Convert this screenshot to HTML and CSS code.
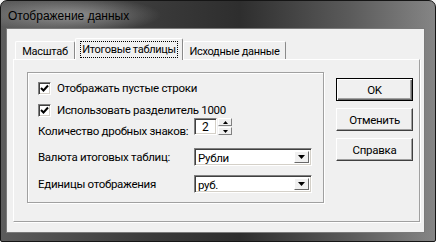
FILE: index.html
```html
<!DOCTYPE html>
<html lang="ru">
<head>
<meta charset="utf-8"/>
<title>Отображение данных</title>
<link rel="stylesheet" href="styles.css">
</head>
<body>
<div class="window">
  <div class="titlebar"><span class="title">Отображение данных</span></div>
  <div class="client">
    <div class="tabs">
      <div class="tab tab-scale">Масштаб</div>
      <div class="tab tab-totals active"><span class="focus">Итоговые таблицы</span></div>
      <div class="tab tab-source">Исходные данные</div>
    </div>
    <div class="panel">
      <div class="group">
        <label class="row row-check first">
          <span class="check"><svg width="9" height="9" viewBox="0 0 9 9"><polyline points="1,4 3.5,6.5 8,1.5" fill="none" stroke="#000" stroke-width="2"/></svg></span>
          Отображать пустые строки
        </label>
        <label class="row row-check">
          <span class="check"><svg width="9" height="9" viewBox="0 0 9 9"><polyline points="1,4 3.5,6.5 8,1.5" fill="none" stroke="#000" stroke-width="2"/></svg></span>
          Использовать разделитель 1000
        </label>
        <div class="row row-spin">
          <span class="caption">Количество дробных знаков:</span>
          <span class="edit spin-edit">2</span>
          <span class="spin">
            <span class="spin-btn"><svg width="5" height="3" viewBox="0 0 5 3"><polygon points="2.5,0 5,3 0,3" fill="#000"/></svg></span>
            <span class="spin-btn"><svg width="5" height="3" viewBox="0 0 5 3"><polygon points="0,0 5,0 2.5,3" fill="#000"/></svg></span>
          </span>
        </div>
        <div class="row row-combo">
          <span class="caption">Валюта итоговых таблиц:</span>
          <span class="combo"><span class="combo-text">Рубли</span><span class="combo-btn"><svg width="7" height="4" viewBox="0 0 7 4"><polygon points="0,0 7,0 3.5,4" fill="#000"/></svg></span></span>
        </div>
        <div class="row row-combo second">
          <span class="caption">Единицы отображения</span>
          <span class="combo"><span class="combo-text">руб.</span><span class="combo-btn"><svg width="7" height="4" viewBox="0 0 7 4"><polygon points="0,0 7,0 3.5,4" fill="#000"/></svg></span></span>
        </div>
      </div>
      <div class="buttons">
        <button class="btn default">OK</button>
        <button class="btn">Отменить</button>
        <button class="btn">Справка</button>
      </div>
    </div>
  </div>
</div>
</body>
</html>
```

FILE: styles.css
```css
body {
  margin: 0;
  background: #f4f4f4;
  font-family: Roboto, "Liberation Sans", Arial, sans-serif;
  font-size: 11.5px;
  letter-spacing: -0.3px;
  color: #000;
  white-space: nowrap;
}
.window {
  width: 436px;
  height: 242px;
  box-sizing: border-box;
  border: 1px solid #151515;
  border-radius: 7px 7px 2px 2px;
  padding: 0 10px 8px 5px;
  background:
    radial-gradient(ellipse 90px 18px at 70px 14px, rgba(200, 200, 200, 0.55), rgba(200, 200, 200, 0) 100%),
    linear-gradient(to right, #5c5c5c 0, #3a3a3a 35%, #2e2e2e 55%, #5a5a5a 80%, #858585 100%);
  display: flex;
  flex-direction: column;
}
.titlebar {
  height: 27px;
  display: flex;
  align-items: center;
  padding-left: 2px;
}
.title {
  font-family: "Liberation Sans", Arial, sans-serif;
  font-size: 12px;
  letter-spacing: 0;
  color: #000;
  margin-top: 2px;
}
.client {
  flex: 1;
  background: #f0f0f0;
  border: 1px solid #7a7a7a;
  padding: 9px 4px 10px 6px;
  display: flex;
  flex-direction: column;
}

/* tabs */
.tabs {
  display: flex;
  align-items: flex-end;
  padding-left: 2px;
  height: 22px;
  position: relative;
  z-index: 1;
  margin-bottom: -1px;
}
.tab {
  height: 18px;
  box-sizing: border-box;
  border-top: 1px solid #fff;
  border-left: 1px solid #fff;
  border-right: 1px solid #8a8a8a;
  border-radius: 2px 2px 0 0;
  display: flex;
  align-items: center;
  justify-content: center;
  margin-bottom: 1px;
  padding-top: 2px;
  font-size: 11px;
}
.tab-scale { width: 60px; }
.tab-totals { width: 108px; }
.tab-source { width: 103px; }
.tab.active {
  height: 22px;
  margin-bottom: 0;
  background: #f0f0f0;
  padding: 1px 0 2px;
}
.focus {
  border: 1px dotted #000;
  padding: 0 1px;
  line-height: 15px;
}

.panel {
  flex: 1;
  border-top: 1px solid #fff;
  border-left: 1px solid #fff;
  border-right: 1px solid #a0a0a0;
  border-bottom: 1px solid #a0a0a0;
  box-shadow: 1px 1px 0 #fff;
  display: flex;
  padding: 12px 0 0 13px;
}

/* group box */
.group {
  width: 297px;
  height: 131px;
  box-sizing: border-box;
  border: 1px solid #a0a0a0;
  box-shadow: 1px 1px 0 #fff, inset 1px 1px 0 #fff;
  padding-left: 10px;
}
.row {
  display: flex;
  align-items: center;
}
.row-check {
  height: 16px;
  margin-top: 6px;
}
.row-check.first { margin-top: 7px; }
.check {
  width: 13px;
  height: 13px;
  box-sizing: border-box;
  background: #fff;
  border-top: 1px solid #808080;
  border-left: 1px solid #808080;
  border-right: 1px solid #fff;
  border-bottom: 1px solid #fff;
  box-shadow: inset 1px 1px 0 #404040, inset -1px -1px 0 #d4d0c8;
  display: flex;
  align-items: center;
  justify-content: center;
  margin-right: 6px;
}
.caption { width: 156px; }
.row-spin {
  height: 17px;
  align-items: flex-end;
}
.row-spin .caption { margin-bottom: -3px; }
.edit {
  background: #fff;
  box-sizing: border-box;
  border-top: 1px solid #808080;
  border-left: 1px solid #808080;
  border-right: 1px solid #fff;
  border-bottom: 1px solid #fff;
  box-shadow: inset 1px 1px 0 #404040, inset -1px -1px 0 #d4d0c8;
}
.spin-edit {
  width: 23px;
  height: 17px;
  display: flex;
  align-items: center;
  padding-left: 7px;
  font-size: 12px;
}
.spin {
  display: flex;
  flex-direction: column;
  margin-left: 1px;
  width: 14px;
  height: 17px;
  gap: 1px;
}
.spin-btn {
  flex: 1;
  background: #f0f0f0;
  border-top: 1px solid #fff;
  border-left: 1px solid #fff;
  border-right: 1px solid #808080;
  border-bottom: 1px solid #808080;
  display: flex;
  align-items: center;
  justify-content: center;
}
.row-combo { height: 17px; margin-top: 13px; }
.row-combo.second { margin-top: 10px; }
.combo {
  width: 118px;
  height: 18px;
  box-sizing: border-box;
  background: #fff;
  border-top: 1px solid #808080;
  border-left: 1px solid #808080;
  border-right: 1px solid #fff;
  border-bottom: 1px solid #fff;
  box-shadow: inset 1px 1px 0 #404040, inset -1px -1px 0 #d4d0c8;
  display: flex;
  padding: 2px 2px 2px 3px;
}
.combo-text { flex: 1; line-height: 14px; }
.combo-btn {
  width: 15px;
  box-sizing: border-box;
  background: #f0f0f0;
  border-top: 1px solid #fff;
  border-left: 1px solid #fff;
  border-right: 1px solid #696969;
  border-bottom: 1px solid #696969;
  display: flex;
  align-items: center;
  justify-content: center;
}

/* buttons */
.buttons {
  display: flex;
  flex-direction: column;
  gap: 7px;
  margin: 6px 0 0 12px;
}
.btn {
  width: 77px;
  height: 23px;
  font-family: inherit;
  font-size: 11.5px;
  letter-spacing: -0.3px;
  background: #f0f0f0;
  border-top: 1px solid #fff;
  border-left: 1px solid #fff;
  border-right: 1px solid #404040;
  border-bottom: 1px solid #404040;
  box-shadow: inset -1px -1px 0 #a0a0a0;
  padding: 0;
  color: #000;
}
.btn.default {
  border: 1px solid #000;
  box-shadow: inset 1px 1px 0 #fff, inset -1px -1px 0 #696969, inset -2px -2px 0 #a0a0a0;
}
```
